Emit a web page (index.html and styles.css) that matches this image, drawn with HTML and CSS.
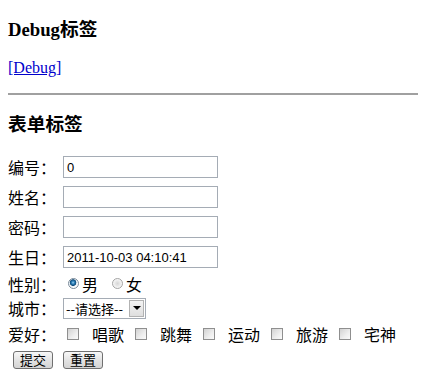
FILE: index.html
```html
<!DOCTYPE html>
<html>
<head>
<meta charset="utf-8">
<link rel="stylesheet" href="styles.css">
</head>
<body>
<h3 class="title">Debug标签</h3>
<p class="debug"><a class="debug-link" href="#">[Debug]</a></p>
<div class="rule"></div>
<h3 class="title title-form">表单标签</h3>
<form class="form">
  <div class="row text-row"><label class="lbl">编号：</label><input class="field" type="text" value="0"></div>
  <div class="row text-row"><label class="lbl">姓名：</label><input class="field" type="text" value=""></div>
  <div class="row text-row"><label class="lbl">密码：</label><input class="field" type="password" value=""></div>
  <div class="row text-row"><label class="lbl">生日：</label><input class="field" type="text" value="2011-10-03 04:10:41"></div>
  <div class="row radio-row">
    <span class="lbl">性别：</span>
    <label class="opt opt-first"><input class="radio" type="radio" name="sex" checked>男</label>
    <label class="opt"><input class="radio" type="radio" name="sex">女</label>
  </div>
  <div class="row select-row">
    <span class="lbl">城市：</span>
    <span class="select"><select class="sel"><option>--请选择--</option></select><span class="arrow"><span class="tri"></span></span></span>
  </div>
  <div class="row check-row">
    <span class="lbl">爱好：</span>
    <label class="hobby"><input class="check" type="checkbox">唱歌</label>
    <label class="hobby"><input class="check" type="checkbox">跳舞</label>
    <label class="hobby"><input class="check" type="checkbox">运动</label>
    <label class="hobby"><input class="check" type="checkbox">旅游</label>
    <label class="hobby"><input class="check" type="checkbox">宅神</label>
  </div>
  <div class="row btn-row">
    <button class="btn btn-submit" type="button">提交</button>
    <button class="btn" type="button">重置</button>
  </div>
</form>
</body>
</html>
```

FILE: styles.css
```css
html {
  overflow: hidden;
}

body {
  margin: 0 8px 0 8px;
  padding-top: 0.1px;
  font-family: "Liberation Serif", "Noto Sans CJK SC", serif;
  color: #000;
  background: #fff;
}

.title {
  font-size: 18.72px;
  font-weight: bold;
  line-height: 22px;
  margin: 18.5px 0;
}

.title-form {
  margin-bottom: 16.5px;
}

.debug {
  font-size: 16px;
  line-height: 18px;
  margin: 16px 0;
}

.debug-link {
  color: #0000cc;
}

.rule {
  width: 418px;
  height: 2px;
  background: #a0a0a0;
  margin: 13px 0 8px 0;
}

.form {
  font-family: "Noto Sans CJK SC", sans-serif;
  font-size: 16px;
  margin: 0;
}

.row {
  display: flex;
  align-items: center;
}

.text-row { height: 30px; }
.radio-row { height: 23px; }
.select-row { height: 26px; }
.check-row { height: 26px; }
.btn-row { height: 26px; }

.lbl {
  width: 48px;
  margin-right: 7px;
  line-height: 20px;
  flex: none;
}

.field {
  width: 155px;
  height: 22px;
  box-sizing: border-box;
  border: 1px solid #a5acb5;
  padding: 0 3px;
  margin: 0;
  font: 13px "Liberation Sans", sans-serif;
  color: #000;
  outline: none;
}

.opt {
  display: flex;
  align-items: center;
  line-height: 20px;
}

.opt-first { margin-right: 14px; }

.radio {
  -webkit-appearance: none;
  appearance: none;
  width: 11px;
  height: 11px;
  margin: 0 3px 0 5px;
  border-radius: 50%;
  border: 1px solid #a4a4a4;
  box-sizing: border-box;
  background: radial-gradient(circle at 50% 50%, #d6d6d6 0, #ececec 3px, #fafafa 5px);
}

.opt + .opt .radio { margin-left: 0; margin-right: 3px; }

.radio:checked {
  border-color: #7a8a99;
  background: radial-gradient(circle at 45% 40%, #9fd0f0 0, #2a7fb8 1.5px, #104a78 3px, #e6eef4 3.6px, #ffffff 5px);
}

.select {
  display: flex;
  align-items: center;
  width: 83px;
  height: 21px;
  box-sizing: border-box;
  border: 1px solid #a5acb5;
  background: #fff;
}

.sel {
  -webkit-appearance: none;
  appearance: none;
  border: none;
  background: transparent;
  font: 13px "Noto Sans CJK SC", sans-serif;
  color: #000;
  padding: 0 0 0 2px;
  margin: 0;
  width: 64px;
  height: 19px;
  line-height: 19px;
  outline: none;
}

.arrow {
  display: flex;
  align-items: center;
  justify-content: center;
  width: 15px;
  height: 17px;
  box-sizing: border-box;
  border: 1px solid #b2b2b2;
  background: linear-gradient(#f4f4f4, #dedede);
  margin-left: 1px;
}

.tri {
  width: 0;
  height: 0;
  border-left: 4px solid transparent;
  border-right: 4px solid transparent;
  border-top: 4px solid #000;
}

.hobby {
  display: flex;
  align-items: center;
  line-height: 20px;
  margin-right: 11px;
}

.check {
  -webkit-appearance: none;
  appearance: none;
  width: 12px;
  height: 12px;
  box-sizing: border-box;
  border: 1px solid #8f8f8f;
  background: linear-gradient(135deg, #d2d2d2 0, #eeeeee 60%, #fbfbfb 100%);
  margin: 0 13px 0 0;
  flex: none;
}

.check-row .lbl { margin-right: 11px; }

.btn {
  width: 40px;
  height: 18px;
  box-sizing: border-box;
  padding: 0;
  border: 1px solid #707070;
  border-radius: 3px;
  background: linear-gradient(#f8f8f8, #e2e2e2 55%, #d4d4d4);
  font: 13px/16px "Noto Sans CJK SC", sans-serif;
  color: #000;
  margin: 0 10px 0 0;
}

.btn-submit { margin-left: 5px; }
```
